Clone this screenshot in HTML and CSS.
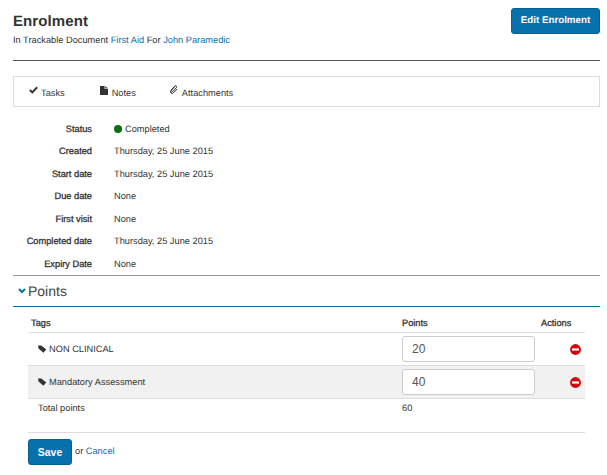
FILE: index.html
```html
<!DOCTYPE html>
<html lang="en">
<head>
<meta charset="utf-8">
<title>Enrolment</title>
<link rel="stylesheet" href="styles.css">
</head>
<body>
<svg class="defs" width="0" height="0" aria-hidden="true">
  <symbol id="i-tag" viewBox="0 0 10 9"><path d="M0 .5H3.6L9.2 5.2 6 8.6 .6 4Z" fill="#333"/></symbol>
  <symbol id="i-minus" viewBox="0 0 12 12"><circle cx="6" cy="6" r="5.9" fill="#d9000d"/><rect x="2.2" y="4.8" width="7.6" height="2.4" fill="#fff"/></symbol>
</svg>
<header class="head">
  <div>
    <h1 class="title">Enrolment</h1>
    <p class="sub">In Trackable Document <a href="#">First Aid</a> For <a href="#">John Paramedic</a></p>
  </div>
  <a class="btn btn-edit" href="#">Edit Enrolment</a>
</header>
<hr class="rule">
<nav class="tabs">
  <a class="tab tab-tasks" href="#"><svg class="tab-icon" width="9" height="8" viewBox="0 0 9 8"><path d="M.8 4 3.3 6.4 8.2 1.2" fill="none" stroke="#333" stroke-width="2"/></svg>Tasks</a>
  <a class="tab tab-notes" href="#"><svg class="tab-icon" width="8" height="9" viewBox="0 0 8 9"><path d="M0 0H4.6V3H8V9H0Z M5.4 0 8 2.4H5.4Z" fill="#333"/></svg>Notes</a>
  <a class="tab tab-att" href="#"><svg class="tab-icon" width="8" height="10" viewBox="0 0 8 10"><path d="M5 1.2 1.2 5.6C.4 6.6 1 7.6 2 7.2L6.4 2.6C7.4 1.4 6 .2 4.8 1L1 5.4C-.2 7.2 1.4 9.4 3.2 8.2L7 4" fill="none" stroke="#333" stroke-width="1"/></svg>Attachments</a>
</nav>
<dl class="details">
  <div class="row"><dt>Status</dt><dd><span class="dot"></span>Completed</dd></div>
  <div class="row"><dt>Created</dt><dd>Thursday, 25 June 2015</dd></div>
  <div class="row"><dt>Start date</dt><dd>Thursday, 25 June 2015</dd></div>
  <div class="row"><dt>Due date</dt><dd>None</dd></div>
  <div class="row"><dt>First visit</dt><dd>None</dd></div>
  <div class="row"><dt>Completed date</dt><dd>Thursday, 25 June 2015</dd></div>
  <div class="row"><dt>Expiry Date</dt><dd>None</dd></div>
</dl>
<section class="points">
  <h2 class="points-title"><svg class="chev" width="8" height="6" viewBox="0 0 8 6"><path d="M1 1 4 4 7 1" fill="none" stroke="#0671ab" stroke-width="2"/></svg>Points</h2>
  <table class="grid">
    <thead>
      <tr><th class="c-tag">Tags</th><th class="c-pts">Points</th><th class="c-act">Actions</th></tr>
    </thead>
    <tbody>
      <tr class="item"><td class="tag"><svg class="tag-icon" width="9" height="8"><use href="#i-tag"/></svg>NON CLINICAL</td><td><input class="num" type="text" value="20"></td><td class="act"><svg width="11" height="11"><use href="#i-minus"/></svg></td></tr>
      <tr class="item alt"><td class="tag"><svg class="tag-icon" width="9" height="8"><use href="#i-tag"/></svg>Mandatory Assessment</td><td><input class="num" type="text" value="40"></td><td class="act"><svg width="11" height="11"><use href="#i-minus"/></svg></td></tr>
      <tr class="total"><td class="total-label">Total points</td><td>60</td><td></td></tr>
    </tbody>
  </table>
  <div class="actions">
    <button class="btn btn-save" type="button">Save</button>
    <span class="or">or <a href="#">Cancel</a></span>
  </div>
</section>
</body>
</html>
```
FILE: styles.css
```css
* { box-sizing: border-box; }
html, body { margin: 0; }
body {
  width: 607px;
  height: 475px;
  overflow: hidden;
  padding: 8px 7px 0 13px;
  background: #fff;
  color: #333;
  font: 9.25px/14px "Liberation Sans", Arial, sans-serif;
  text-rendering: geometricPrecision;
}
a { color: #0671ab; text-decoration: none; }
.defs { position: absolute; }
.head { display: flex; justify-content: space-between; align-items: flex-start; height: 52px; }
.title { margin: 5px 0 0; font-size: 15px; line-height: 18px; font-weight: bold; letter-spacing: .1px; color: #333; }
.sub { margin: 2px 0 0; line-height: 14px; }
.btn {
  display: inline-block;
  border: 1px solid #05618f;
  border-radius: 3px;
  background: #0671ab;
  color: #fff;
  font-family: inherit;
  font-weight: bold;
}
.btn-edit { width: 89px; height: 26px; line-height: 24px; text-align: center; font-size: 9.75px; }
.rule { margin: 0; border: 0; border-top: 1px solid #555; }
.tabs {
  display: flex;
  align-items: center;
  height: 31px;
  margin-top: 15px;
  padding: 2px 0 0 15px;
  border: 1px solid #ddd;
}
.tab { display: flex; align-items: center; color: #333; }
.tab-tasks { margin-right: 35px; }
.tab-notes { margin-right: 34px; }
.tab-icon { margin-right: 3px; margin-top: -5px; }
.tab-notes .tab-icon { margin-right: 4px; }
.tab-att .tab-icon { margin-right: 4px; }
.details { margin: 10.5px 0 0; }
.row { display: flex; height: 22.5px; align-items: center; }
.row dt { width: 79px; text-align: right; -webkit-text-stroke: .3px #333; }
.row dd { margin: 0 0 0 22px; display: flex; align-items: center; }
.dot { width: 8px; height: 8px; border-radius: 50%; background: #0c6e12; margin-right: 3px; }
.points { margin-top: -.5px; }
.points-title {
  display: flex;
  align-items: center;
  height: 32px;
  margin: 0;
  padding: 1px 0 0 5px;
  border-top: 1px solid #999;
  border-bottom: 1px solid #0671ab;
  font-size: 14px;
  font-weight: normal;
  color: #444;
}
.chev { margin-right: 2px; }
.grid { width: 557px; margin: 9px 0 0 15px; border-collapse: collapse; table-layout: fixed; }
.grid th { height: 17px; padding: 0 3px 2px; text-align: left; font-weight: normal; -webkit-text-stroke: .3px #333; border-bottom: 1px solid #ddd; }
.c-tag { width: 371px; }
.c-pts { width: 136px; }
.c-act { width: 50px; }
.grid .c-act { padding-left: 6px; padding-right: 0; }
.item td { height: 33px; padding: 0; border-bottom: 1px solid #ddd; }
.item td:nth-child(2) { padding-left: 3px; }
.alt td { background: #f1f1f1; }
.item .tag { padding-left: 10px; }
.tag-icon { margin-right: 2px; vertical-align: -1px; }
.num {
  display: block;
  width: 133px;
  height: 26px;
  padding: 0 9px;
  border: 1px solid #ccc;
  border-radius: 3px;
  background: #fff;
  color: #555;
  font: 12px "Liberation Sans", Arial, sans-serif;
}
.act svg { display: block; margin: 0 4px 0 auto; }
.total td { height: 18px; padding: 0 0 0 3px; }
.total .total-label { padding-left: 10px; }
.actions { width: 557px; height: 34px; margin: 15px 0 0 15px; padding-top: 6px; border-top: 1px solid #ddd; display: flex; align-items: flex-start; }
.btn-save { width: 44px; height: 26px; padding: 0; font-size: 10.5px; }
.or { margin: 5px 0 0 3px; }
```
